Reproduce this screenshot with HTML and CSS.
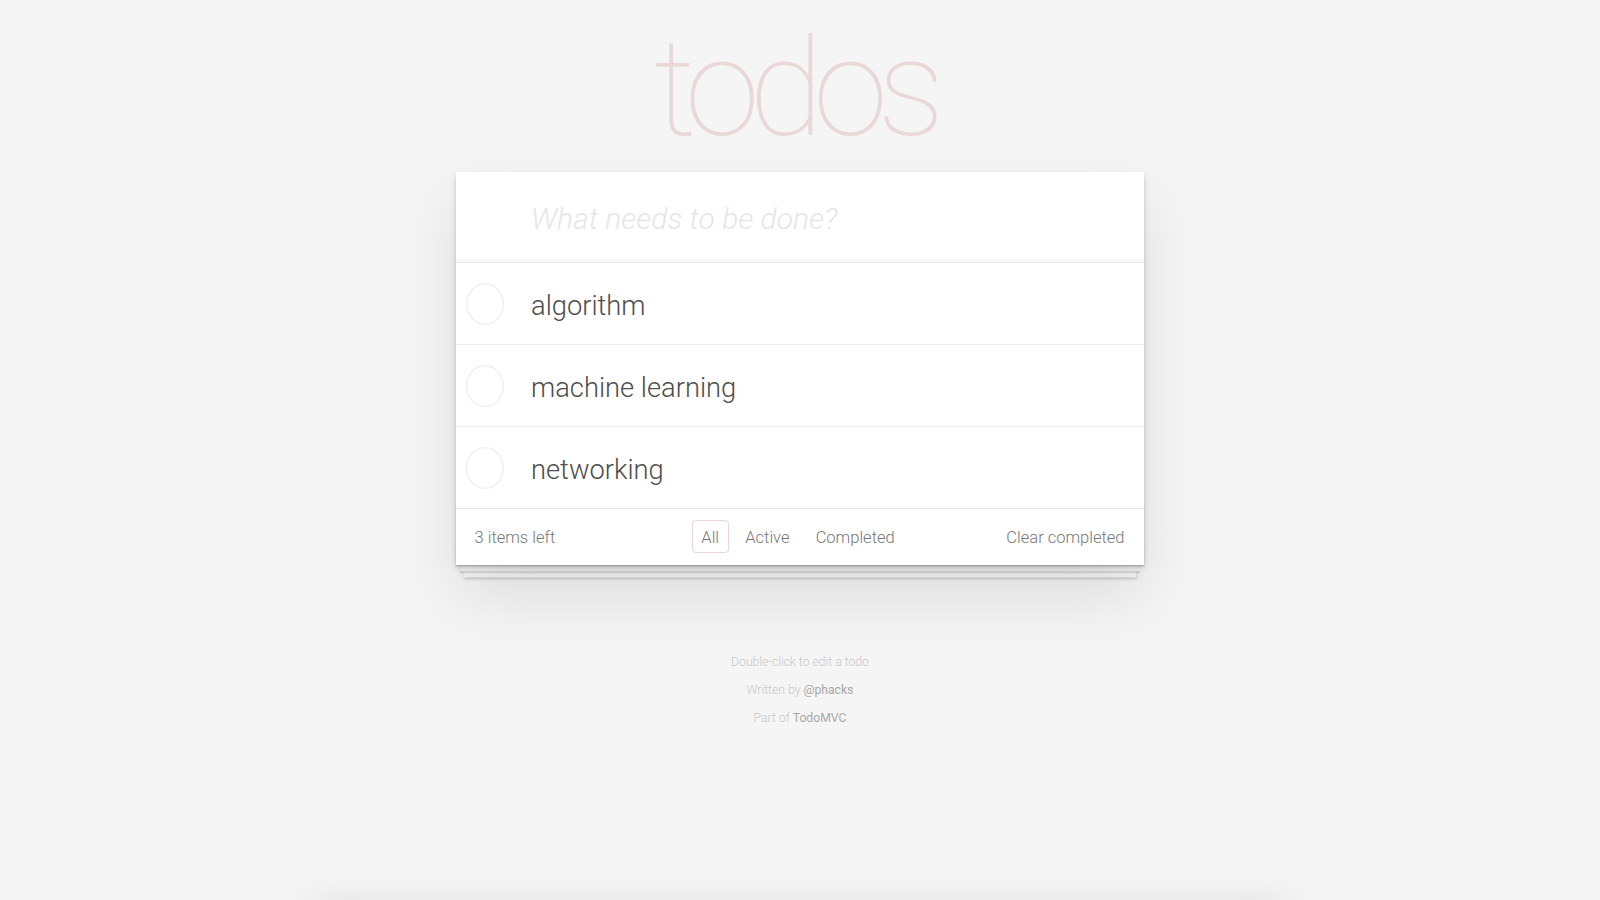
FILE: index.html
```html
<!DOCTYPE html>
<html lang="en">
<head>
<meta charset="utf-8">
<title>todos</title>
<link rel="stylesheet" href="styles.css">
</head>
<body>
<section class="todoapp-wrap">
  <header class="header">
    <h1 class="title">todos</h1>
  </header>
  <section class="todoapp">
    <input class="new-todo" placeholder="What needs to be done?">
    <ul class="todo-list">
      <li class="todo">
        <span class="toggle"><svg width="40" height="44" viewBox="0 0 40 44"><ellipse cx="20" cy="22" rx="18.4" ry="20.4" fill="none" stroke="#ededed" stroke-width="1.25"/></svg></span>
        <label class="todo-label">algorithm</label>
      </li>
      <li class="todo">
        <span class="toggle"><svg width="40" height="44" viewBox="0 0 40 44"><ellipse cx="20" cy="22" rx="18.4" ry="20.4" fill="none" stroke="#ededed" stroke-width="1.25"/></svg></span>
        <label class="todo-label">machine learning</label>
      </li>
      <li class="todo">
        <span class="toggle"><svg width="40" height="44" viewBox="0 0 40 44"><ellipse cx="20" cy="22" rx="18.4" ry="20.4" fill="none" stroke="#ededed" stroke-width="1.25"/></svg></span>
        <label class="todo-label">networking</label>
      </li>
    </ul>
    <footer class="footer">
      <span class="todo-count">3 items left</span>
      <ul class="filters">
        <li><a class="filter selected" href="#/">All</a></li>
        <li><a class="filter" href="#/active">Active</a></li>
        <li><a class="filter" href="#/completed">Completed</a></li>
      </ul>
      <button class="clear-completed">Clear completed</button>
    </footer>
  </section>
  <footer class="info">
    <p>Double-click to edit a todo</p>
    <p>Written by <a href="#">@phacks</a></p>
    <p>Part of <a href="#">TodoMVC</a></p>
  </footer>
</section>
<div class="page-edge"></div>
</body>
</html>
```

FILE: styles.css
```css
html, body {
  margin: 0;
  padding: 0;
}

html {
  overflow: hidden;
}

body {
  background: #f5f5f5;
  font-family: Roboto, "Helvetica Neue", Helvetica, Arial, sans-serif;
  font-weight: 300;
  color: #4d4d4d;
  -webkit-font-smoothing: antialiased;
}

.todoapp-wrap {
  width: 688px;
  margin: 0 auto;
}

.header {
  display: flex;
  justify-content: center;
}

.title {
  margin: 21px 0 15px;
  padding-right: 12px;
  font-size: 136px;
  line-height: 136px;
  font-weight: 100;
  letter-spacing: -10.5px;
  color: rgba(175, 47, 47, 0.15);
  text-rendering: optimizeLegibility;
}

.todoapp {
  position: relative;
  background: #fff;
  box-shadow: 0 2.5px 5px 0 rgba(0, 0, 0, 0.2), 0 31px 62px 0 rgba(0, 0, 0, 0.1);
}

.new-todo {
  display: block;
  box-sizing: border-box;
  width: 100%;
  height: 90px;
  margin: 0;
  padding: 3px 16px 0 75px;
  border: none;
  outline: none;
  background: transparent;
  font-family: inherit;
  font-size: 30px;
  font-weight: 300;
  color: #4d4d4d;
  box-shadow: inset 0 -2.5px 1.25px rgba(0, 0, 0, 0.03);
}

.new-todo::placeholder {
  font-style: italic;
  font-weight: 300;
  color: #e6e6e6;
}

.todo-list {
  margin: 0;
  padding: 0;
  list-style: none;
  border-top: 1px solid #e6e6e6;
}

.todo {
  display: flex;
  align-items: center;
  height: 82px;
  box-sizing: border-box;
  padding-left: 9px;
  border-bottom: 1px solid #ededed;
}

.todo:last-child {
  height: 81px;
  border-bottom: none;
}

.toggle {
  display: flex;
  width: 40px;
  height: 44px;
}

.todo-label {
  margin-left: 26px;
  padding-top: 5px;
  font-size: 27.3px;
  color: #4d4d4d;
}

.footer {
  display: grid;
  grid-template-columns: 1fr auto 1fr;
  align-items: center;
  height: 57px;
  box-sizing: border-box;
  padding: 0 19.5px 0 18.5px;
  border-top: 1px solid #e6e6e6;
  font-size: 16.5px;
  color: #777;
  position: relative;
}

.footer::before {
  content: "";
  position: absolute;
  left: 0;
  right: 0;
  bottom: 0;
  height: 62px;
  overflow: hidden;
  z-index: -1;
  box-shadow: 0 1.25px 1.25px rgba(0, 0, 0, 0.2),
              0 10px 0 -3.75px #f6f6f6,
              0 11.25px 1.25px -3.75px rgba(0, 0, 0, 0.2),
              0 20px 0 -7.5px #f6f6f6,
              0 21.25px 2.5px -7.5px rgba(0, 0, 0, 0.2);
}

.todo-count {
  padding-top: 1px;
}

.filters {
  display: flex;
  margin: 0 3px 2px 0;
  padding: 0;
  list-style: none;
}

.filter {
  display: flex;
  align-items: center;
  box-sizing: border-box;
  height: 33px;
  margin: 0 3.5px;
  padding: 2px 8.6px 0;
  border: 1.25px solid transparent;
  border-radius: 3.75px;
  color: inherit;
  text-decoration: none;
}

.filter.selected {
  border-color: rgba(175, 47, 47, 0.2);
}

.clear-completed {
  justify-self: end;
  margin: 0;
  padding: 1px 0 0;
  border: none;
  background: none;
  font-family: inherit;
  font-size: 16.5px;
  font-weight: 300;
  color: #777;
}

.info {
  margin-top: 83px;
  text-align: center;
  font-size: 12.2px;
  color: #c6c6c6;
  text-shadow: 0 1px 0 rgba(255, 255, 255, 0.5);
}

.info p {
  margin: 0;
  line-height: 28px;
}

.info a {
  color: #a6a6a6;
  font-weight: 400;
  text-decoration: none;
}

.page-edge {
  position: fixed;
  left: 310px;
  right: 310px;
  top: 905px;
  height: 200px;
  background: #f5f5f5;
  box-shadow: 0 0 40px rgba(0, 0, 0, 0.1);
}
```
